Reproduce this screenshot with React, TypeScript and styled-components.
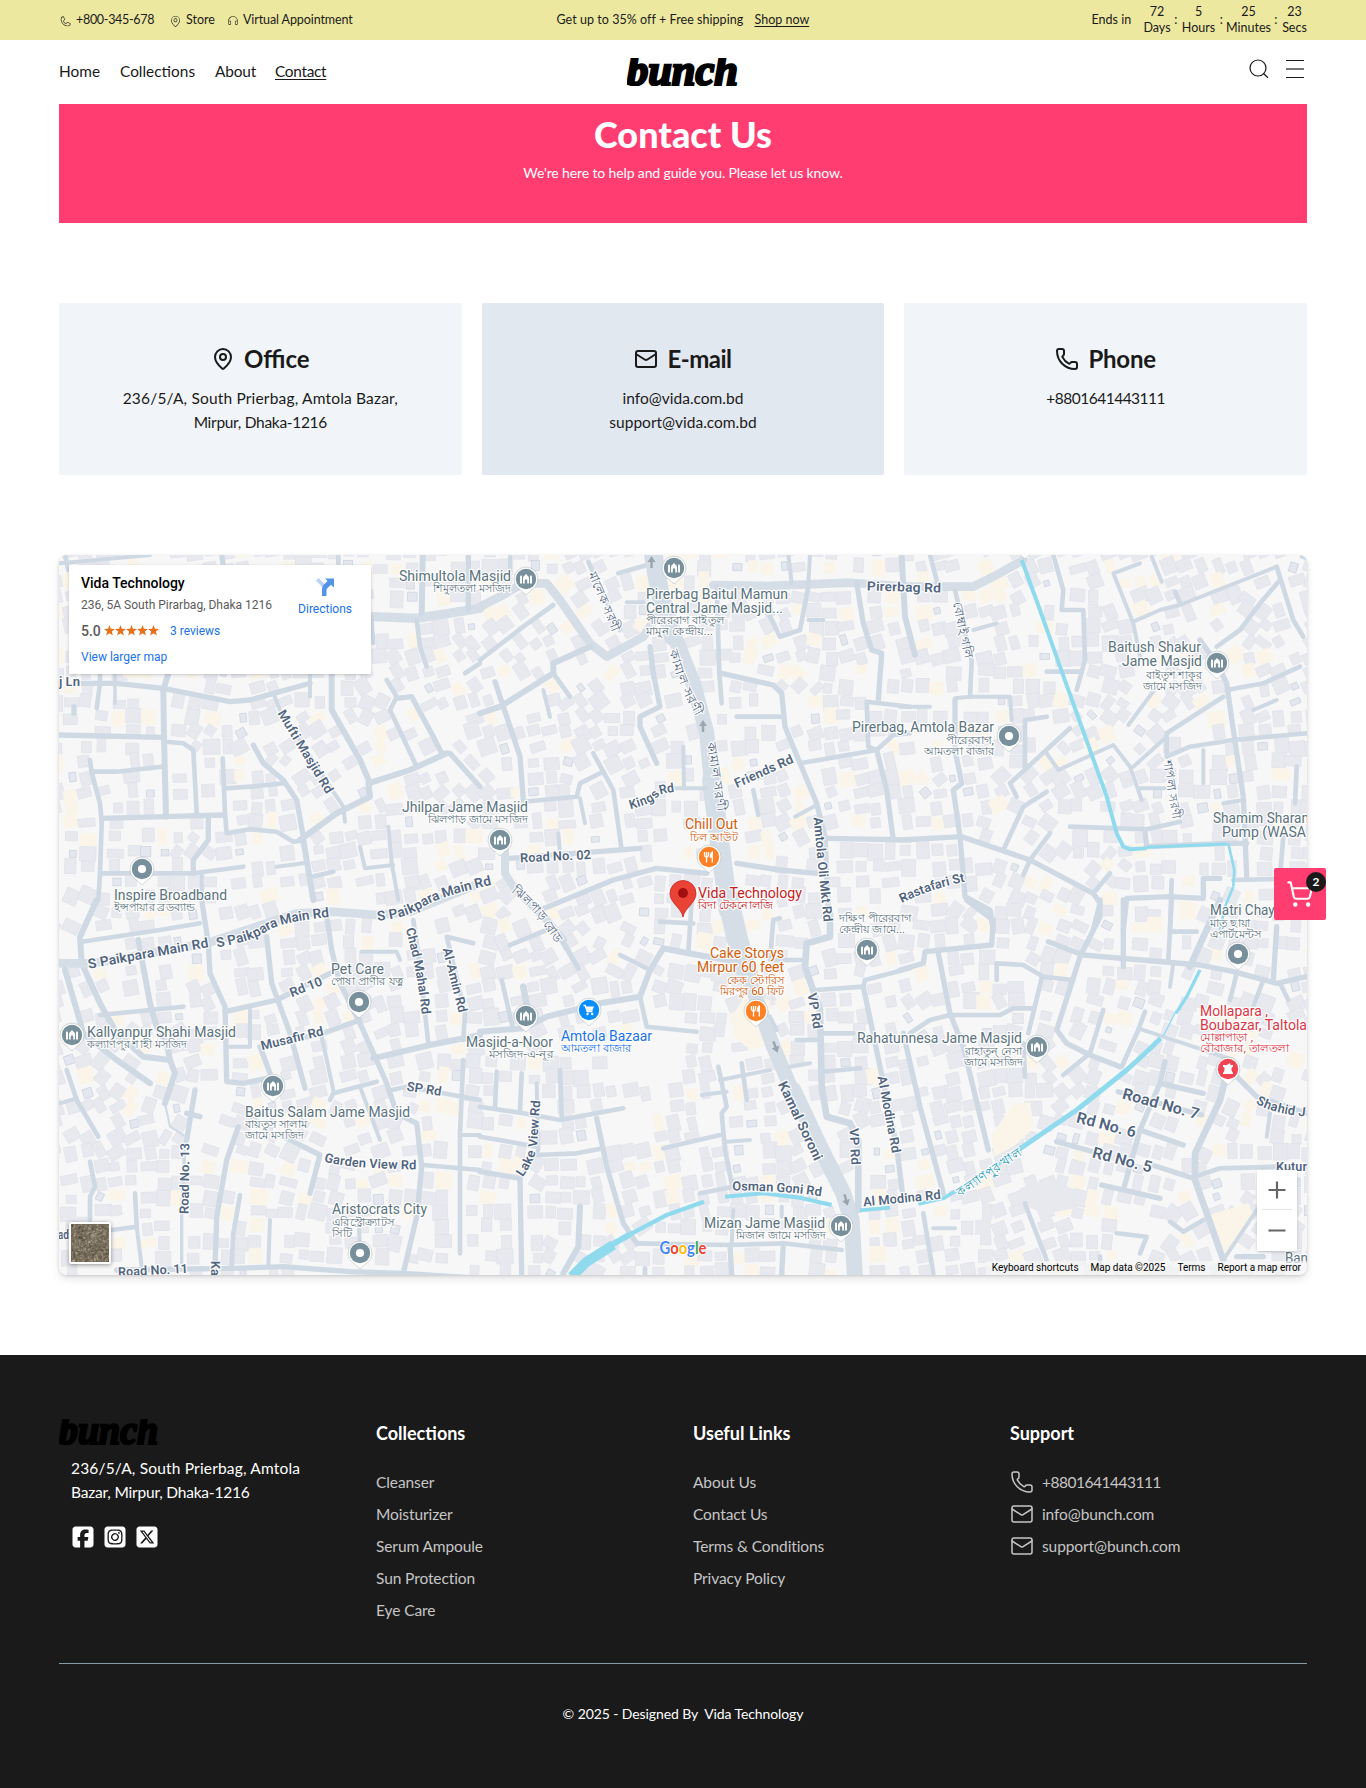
import React from "react";
import styled, { createGlobalStyle, css } from "styled-components";
import { MapPin, Mail, Phone, ShoppingCart } from "lucide-react";
import { PiPhoneLight, PiMapPinLight, PiHeadphonesLight } from "react-icons/pi";
import { FaSquareFacebook, FaSquareInstagram, FaSquareXTwitter } from "react-icons/fa6";

const GlobalStyle = createGlobalStyle`
  *, *::before, *::after { box-sizing: border-box; }
  body { margin: 0; background: #fff; color: #1a1a1a; font-family: Lato, "Noto Sans", sans-serif; }
  h1, h2, h3, p, ul { margin: 0; padding: 0; }
  ul { list-style: none; }
  a { color: inherit; text-decoration: none; }
`;

/* ---------- shared ---------- */

const Page = styled.div`
  width: 1366px;
  height: 1788px;
  display: flex;
  flex-direction: column;
`;

const Container = styled.div`
  width: 1248px;
  margin: 0 auto;
`;

const Fixed = styled.span<{ $w: number; $ls?: number; $line?: boolean }>`
  display: inline-block;
  width: ${(p) => p.$w}px;
  letter-spacing: ${(p) => p.$ls ?? 0}px;
  white-space: nowrap;
  ${(p) =>
    p.$line &&
    css`
      text-decoration: underline;
      text-underline-offset: 2px;
      text-decoration-thickness: 1px;
    `}
`;

const Spaced = styled.span<{ $ls: number }>`
  letter-spacing: ${(p) => p.$ls}px;
`;

/* ---------- announcement bar ---------- */

const TopBar = styled.div`
  background: #ede8a0;
  height: 40px;
  font-size: 12.5px;
  line-height: 16px;
`;

const TopInner = styled(Container)`
  height: 40px;
  display: grid;
  grid-template-columns: 1fr auto 1fr;
  align-items: center;
`;

const TopLeft = styled.div`
  display: flex;
  align-items: center;
`;

const TopItem = styled.a`
  display: flex;
  align-items: center;
  gap: 4px;
  margin-right: 14px;
  svg { margin-top: 2px; }
`;

const TopCenter = styled.div`
  display: flex;
  gap: 8px;
`;

const TopRight = styled.div`
  display: flex;
  justify-content: flex-end;
  align-items: center;
`;

const Unit = styled.div<{ $w: number }>`
  width: ${(p) => p.$w}px;
  display: flex;
  flex-direction: column;
  align-items: center;
  white-space: nowrap;
`;

const Colon = styled.span`
  width: 12.5px;
  text-align: center;
`;

/* ---------- header ---------- */

const Header = styled(Container)`
  height: 64px;
  display: grid;
  grid-template-columns: 1fr auto 1fr;
  align-items: center;
`;

const Nav = styled.nav`
  display: flex;
  gap: 20px;
  padding-bottom: 2px;
  font-size: 15.4px;
  line-height: 24px;
`;

const HeaderTools = styled.div`
  display: flex;
  justify-content: flex-end;
  gap: 16px;
  padding: 0 2px 8px 0;
`;

const LogoSvg = styled.svg`
  display: block;
  overflow: hidden;
`;

function Logo({ width, height }: { width: number; height: number }) {
  return (
    <LogoSvg width={width} height={height} viewBox="0 0 112 28" preserveAspectRatio="none">
      <text
        x="0"
        y="26.8"
        fontFamily='"Liberation Serif", serif'
        fontWeight="700"
        fontStyle="italic"
        fontSize="45"
        stroke="#000"
        strokeWidth="2.6"
        textLength="111"
        lengthAdjust="spacingAndGlyphs"
      >
        bunch
      </text>
    </LogoSvg>
  );
}

/* ---------- hero + cards ---------- */

const Hero = styled(Container)`
  height: 119px;
  background: #ff3d71;
  color: #fff;
  text-align: center;
  padding-top: 10px;
`;

const HeroTitle = styled.h1`
  font-size: 36px;
  line-height: 40px;
  font-weight: 900;
`;

const HeroText = styled.p`
  margin-top: 9px;
  font-size: 14px;
  line-height: 20px;
  letter-spacing: -0.13px;
`;

const Cards = styled(Container)`
  margin-top: 80px;
  display: grid;
  grid-template-columns: repeat(3, 1fr);
  gap: 20px;
`;

const Card = styled.section<{ $dark?: boolean }>`
  height: 172px;
  border-radius: 2px;
  background: ${(p) => (p.$dark ? "#e2e8f0" : "#f1f5f9")};
  padding-top: 40px;
  text-align: center;
`;

const CardTitle = styled.h2`
  display: flex;
  justify-content: center;
  align-items: center;
  gap: 9px;
  font-size: 24px;
  line-height: 32px;
  font-weight: 700;
`;

const CardText = styled.p`
  margin-top: 11px;
  font-size: 15.5px;
  line-height: 24px;
`;

/* ---------- map data ---------- */

type Pt = [number, number];
type Road = { pts: Pt[]; w: number };

const SHEETS: { ox: number; oy: number; roads: string[]; water: string[] }[] = [
  {
    ox: 50,
    oy: 550,
    roads: [
      "16 85,400 200,400 340,415 540,455 600,450 780,400",
      "16 30,555 335,562",
      "18 355,370 340,420 342,560 348,800",
      "14 150,370 150,400 140,475",
      "10 195,370 195,460",
      "16 72,470 72,490",
      "14 120,630 125,670 150,760 155,820 150,970 145,1050",
      "14 130,665 200,665 335,650",
      "14 345,575 400,580 430,600 440,790",
      "16 155,805 340,800 520,795",
      "14 518,625 525,790 530,850 600,838 680,845 730,875 750,872",
      "14 525,715 600,710 700,700",
      "16 610,585 640,640 700,690 740,750 760,860",
      "16 475,800 475,870 430,930 430,970",
      "14 155,970 430,970 580,950",
      "12 455,975 455,1050",
      "18 750,870 860,790 960,740 955,700 1080,660 1190,610",
      "12 670,430 690,480 850,725 880,770 885,815",
      "12 780,370 780,440",
      "18 845,370 845,480 930,630 960,700",
      "18 760,870 790,1050",
      "12 680,950 760,940",
      "14 785,980 850,965",
      "14 1010,390 1040,440 1020,480 1100,650",
      "16 1040,445 1085,440 1150,560 1175,610 1200,610 1290,710",
      "12 1015,830 1025,940 1045,1050",
      "12 930,890 945,955 1030,945",
      "28 970,200 1100,205 1290,175",
      "18 1118,15 1115,190",
      "14 1100,210 1110,290 1130,350",
      "16 1255,15 1255,180",
      "12 30,40 300,15",
      "14 45,15 55,60",
      "16 515,15 520,45",
      "14 865,15 865,45",
      "12 965,200 970,280",
      "14 1245,370 1290,340",
    ],
    water: [],
  },
  {
    ox: 480,
    oy: 550,
    roads: [
      "26 0,170 60,140 130,100 200,100 240,150 330,280 380,320 490,260 530,200",
      "12 90,15 90,60",
      "14 220,165 130,230 0,330",
      "14 325,35 350,90 420,240",
      "14 415,70 520,40",
      "56 520,15 540,130 580,260",
      "46 580,250 640,400 680,550 695,700",
      "58 695,690 715,850 735,1000 745,1080",
      "26 700,105 860,108 1110,98 1290,110",
      "14 710,110 718,370 725,460",
      "16 510,290 520,370 540,470 480,500 480,530 530,640",
      "18 330,290 220,340 220,370 60,470 0,490",
      "16 45,395 80,500 120,620 130,750",
      "14 220,370 270,440",
      "12 190,420 210,500",
      "14 130,755 290,740 300,700 370,665 340,610",
      "14 370,665 400,720 425,900",
      "16 725,370 880,405 905,430 915,530 960,640 1010,760 1035,860 1045,1080",
      "14 770,500 910,500",
      "14 960,640 1190,600 1240,555 1290,550",
      "12 610,590 612,715",
      "12 560,715 680,715",
      "16 90,925 480,895",
      "24 75,890 75,970 100,1010 200,1110 250,1170",
      "16 770,940 900,960 1010,970",
      "16 180,1080 400,990 530,955 680,970",
      "16 1130,100 1150,220 1175,300 1205,310 1195,450",
      "14 1290,470 1160,455 1165,590 1190,600",
      "16 1190,600 1220,720 1240,870",
      "16 1045,865 1290,870",
      "12 925,15 935,100",
      "12 990,15 985,100",
      "14 985,110 960,240 900,260 870,200",
      "12 985,210 1030,210",
      "14 820,720 835,795",
      "12 945,800 1010,765",
      "12 300,745 315,820",
      "12 235,850 240,910",
      "12 440,157 490,157",
    ],
    water: [],
  },
  {
    ox: 900,
    oy: 550,
    roads: [
      "26 0,110 115,110 220,110 280,80 370,30",
      "14 90,15 115,110",
      "18 5,20 15,200 45,315",
      "14 165,120 215,330 210,440",
      "12 165,445 210,440 330,440 335,510",
      "12 220,240 290,220",
      "14 460,15 490,120 485,180 550,180 555,330 530,420",
      "12 720,40 640,70 700,220 720,320",
      "12 700,215 780,180 840,165 1130,50",
      "14 825,125 840,160",
      "12 755,20 785,95",
      "14 1140,90 1080,160 1020,240 950,290",
      "14 1130,50 1180,210 1210,260",
      "16 900,270 950,340 980,400 1000,540 1030,740 1040,980",
      "14 980,420 1090,400 1200,350",
      "12 685,525 770,410",
      "14 970,440 800,550 800,620 870,590 1000,570 1220,550",
      "14 440,365 540,365",
      "14 440,500 375,510 375,650",
      "14 510,535 330,700 350,740",
      "12 440,610 475,660 640,585 690,650 725,750",
      "12 720,715 800,715",
      "14 440,725 370,770 310,900",
      "12 700,650 800,560",
      "14 510,830 740,838 840,815",
      "16 735,845 740,890 980,880 1040,880",
      "16 0,870 185,860 390,930 580,1030 600,1060 580,1140",
      "16 165,450 165,600 185,700 160,720 180,860 195,1040 270,1080 280,1140",
      "14 450,850 390,930 370,975",
      "14 630,970 580,1030",
      "14 815,990 810,1140",
      "16 670,1140 680,1045 810,1040 910,1045 910,985 960,985",
      "14 1000,990 1220,985",
      "12 970,760 1030,750",
      "14 1190,650 1185,760",
      "14 1150,860 1140,980",
      "12 910,600 910,700",
      "12 1060,480 1130,450",
      "12 1205,20 1220,25",
      "12 0,470 90,470",
    ],
    water: [
      "12 365,30 420,180 480,350 570,600 620,740 650,850 670,890 690,898 740,895",
      "9 740,892 980,882",
      "8 985,880 1003,960 1000,1010",
      "8 1000,1010 975,1070 960,1140",
    ],
  },
  {
    ox: 50,
    oy: 900,
    roads: [
      "18 140,0 90,110 95,190 150,310 200,400 280,470 360,480",
      "26 30,190 130,190 470,130 650,70 740,40 850,35 980,45 1080,35 1290,-50",
      "14 95,125 330,90 450,70",
      "18 265,120 300,310 320,380 350,430 360,480 375,520 345,610",
      "6 345,610 360,680 400,705",
      "14 150,345 400,320",
      "18 45,210 80,330 100,400 200,480 300,550",
      "16 455,0 475,130 480,220 525,320 530,545 580,550 650,535",
      "16 525,335 680,300 840,220",
      "12 540,440 600,440 600,330",
      "16 650,110 665,250 720,400 765,565",
      "16 830,50 845,150 870,250 930,370 975,470 1010,550 1040,640 1100,670 1115,800 1100,950 1060,1120",
      "16 930,360 820,400 630,440 660,520",
      "12 815,410 850,570",
      "18 970,475 1140,435 1290,405",
      "14 1090,60 1110,200 1135,430",
      "12 935,155 1040,155 1050,180",
      "14 1240,420 1245,340 1200,150 1190,110 1270,130",
      "14 840,600 850,580 980,545",
      "12 930,560 990,720",
      "14 1025,570 1070,560 1180,580 1290,600",
      "14 1240,480 1230,700 1230,1060",
      "14 1120,795 1290,810",
      "12 1240,705 1290,705",
      "16 435,570 410,720",
      "16 410,640 450,650",
      "10 405,730 395,940 395,1090",
      "16 565,680 530,780 500,950 495,1100",
      "16 700,710 810,765 780,880",
      "14 570,885 550,1000 545,1100",
      "16 200,1110 545,1105 700,1100 900,1115 1060,1120 1290,1135",
      "12 660,960 655,1100",
      "14 120,785 135,860 120,890 120,960",
      "14 255,880 260,980 185,990",
      "12 260,980 275,1100",
      "14 50,510 80,600 145,710",
      "12 30,610 80,595",
      "12 925,950 930,1040",
    ],
    water: [],
  },
  {
    ox: 480,
    oy: 900,
    roads: [
      "64 745,0 770,110 805,230",
      "44 800,220 830,300 880,440 940,580",
      "48 940,570 1020,740 1090,880 1115,960 1125,1135",
      "14 635,0 625,160",
      "14 540,65 640,70",
      "18 770,185 625,160 550,145 510,210 480,290 360,310 200,350 130,385 0,395",
      "14 420,165 510,210",
      "14 480,290 500,380 650,395",
      "14 900,55 880,60 870,180 970,180",
      "20 1050,40 1050,110 980,130 975,200 1020,330 1025,560 1040,650 1110,670 1135,720 1135,930",
      "14 1010,270 1150,260 1155,240 1290,205",
      "16 1150,260 1175,380 1200,500 1250,740 1270,900",
      "14 1030,400 1120,400",
      "14 950,420 1020,420",
      "14 1030,515 1140,505",
      "14 90,135 200,90",
      "16 240,110 295,205",
      "14 65,240 100,390",
      "20 130,260 145,340",
      "14 50,515 45,620",
      "14 125,520 120,630",
      "14 240,510 245,650",
      "12 170,550 175,750 125,830",
      "14 0,620 130,640 240,660 430,625",
      "16 350,655 380,800 430,970 470,1030",
      "14 0,710 170,740",
      "14 170,765 290,760 370,745",
      "16 0,815 120,835 125,1125",
      "14 715,500 740,620 725,640 735,750 755,850",
      "12 665,585 740,575",
      "14 785,490 800,600",
      "12 720,540 870,510",
      "12 930,500 990,490",
      "14 550,745 720,705",
      "12 740,725 810,720",
      "14 660,880 760,860",
      "18 300,920 295,1040 250,1120",
      "14 470,1030 750,1035 910,1030 1085,1050",
      "16 750,1035 755,1125",
      "16 910,1030 905,1125",
      "12 760,930 755,1030",
      "12 905,920 905,950",
      "14 495,1105 495,1125",
      "12 870,350 890,390",
    ],
    water: [
      "30 275,1130 320,1085 400,1035",
      "18 350,1060 450,1003",
      "13 450,1003 560,945 672,905",
      "12 735,890 850,880 960,893 1055,915",
      "11 1140,931 1230,923",
    ],
  },
  {
    ox: 900,
    oy: 900,
    roads: [
      "16 0,210 70,190 75,155 275,135 280,60 200,0",
      "16 115,160 150,340 190,440 265,750",
      "14 30,400 90,360 150,345 300,345 340,325 400,325",
      "14 290,240 290,190 370,195 430,230 520,240",
      "14 425,235 385,400",
      "14 370,430 375,530",
      "16 600,0 600,50 540,170 470,390 500,430 570,465 660,500",
      "16 445,125 550,165 900,195 1000,215 1130,250 1220,230",
      "16 670,0 670,200",
      "14 815,0 805,180",
      "12 820,190 810,260",
      "14 610,330 570,460 490,525",
      "14 735,335 715,390 665,500",
      "12 715,385 880,440 1000,480",
      "16 10,400 60,620 130,880",
      "16 795,485 780,550 720,690 670,870",
      "16 780,550 910,580",
      "16 720,690 850,735",
      "16 470,725 580,755",
      "16 740,790 880,835",
      "16 605,855 780,895",
      "16 655,575 905,645",
      "20 980,520 960,600 885,760 885,840 970,1080",
      "14 885,830 960,805 1130,800 1220,800",
      "16 1010,530 1070,590 1220,640",
      "12 970,1080 1070,930",
      "14 910,960 850,995 810,965",
      "14 1010,220 990,300",
      "14 1090,240 1060,320",
      "16 1130,80 1120,240",
      "14 1140,250 1165,300",
      "12 1110,640 1100,710",
      "14 375,910 390,950 440,1080",
      "14 70,940 100,1120",
      "12 100,985 165,985",
      "14 650,1000 740,1010 720,1060",
      "16 1010,1070 1090,1070",
      "14 600,1070 600,1100",
      "14 815,95 890,95",
      "20 870,200 960,0",
    ],
    water: [
      "11 55,912 130,895 240,830 340,760",
      "15 340,760 420,705 530,630 680,510 730,465 782,415",
      "4 790,408 830,330",
      "10 828,340 860,290 900,210",
    ],
  },
];

function parse(line: string, ox: number, oy: number): Road {
  const [w, ...rest] = line.split(" ");
  return {
    w: Number(w) / 3,
    pts: rest.map((p) => {
      const [x, y] = p.split(",").map(Number);
      return [ox + x / 3, oy + y / 3] as Pt;
    }),
  };
}

const ROADS = SHEETS.flatMap((s) => s.roads.map((r) => parse(r, s.ox, s.oy)));
const WATER = SHEETS.flatMap((s) => s.water.map((r) => parse(r, s.ox, s.oy)));

/* Open ground without houses: x, y, radius */
const CLEARINGS: [number, number, number][] = [
  [520, 698, 22],
  [655, 1058, 30],
  [625, 1120, 26],
  [470, 945, 20],
  [215, 1100, 18],
  [170, 1060, 14],
  [660, 1020, 18],
  [1040, 730, 16],
  [1140, 1235, 26],
  [1232, 1190, 14],
  [110, 760, 14],
  [455, 725, 18],
];

function makeRandom(seed: number) {
  let a = seed;
  return () => {
    a = (a + 0x6d2b79f5) | 0;
    let t = Math.imul(a ^ (a >>> 15), 1 | a);
    t = (t + Math.imul(t ^ (t >>> 7), 61 | t)) ^ t;
    return ((t ^ (t >>> 14)) >>> 0) / 4294967296;
  };
}

type Building = { x: number; y: number; w: number; h: number; a: number; kind: number };

function makeBuildings(): Building[] {
  const rnd = makeRandom(17);
  const segs: [Pt, Pt, number][] = [];
  ROADS.forEach((r) => {
    for (let i = 1; i < r.pts.length; i++) segs.push([r.pts[i - 1], r.pts[i], r.w]);
  });
  const out: Building[] = [];
  for (let gy = 552; gy < 1285; gy += 15) {
    for (let gx = 55; gx < 1315; gx += 15.5) {
      const x = gx + (rnd() - 0.5) * 5;
      const y = gy + (rnd() - 0.5) * 5;
      const w = 8 + rnd() * 8;
      const h = 9 + rnd() * 8;
      const keep = rnd();
      const tone = rnd();
      let best = 1e9;
      let ang = 0;
      let rw = 0;
      for (const [p, q, sw] of segs) {
        const dx = q[0] - p[0];
        const dy = q[1] - p[1];
        const t = Math.max(0, Math.min(1, ((x - p[0]) * dx + (y - p[1]) * dy) / (dx * dx + dy * dy)));
        const d = Math.hypot(x - p[0] - t * dx, y - p[1] - t * dy);
        if (d < best) {
          best = d;
          ang = (Math.atan2(dy, dx) * 180) / Math.PI;
          rw = sw;
        }
      }
      if (best < rw / 2 + 2) continue;
      if (CLEARINGS.some(([cx, cy, r]) => Math.hypot(x - cx, y - cy) < r)) continue;
      if (keep > (best > 30 ? 0.5 : 0.83)) continue;
      const main = rw > 8 ? 0.4 : 0.1;
      const kind = tone < main ? 1 : tone > 0.94 ? 2 : 0;
      out.push({ x, y, w: kind === 2 ? w * 0.65 : w, h: kind === 2 ? h * 0.6 : h, a: ang, kind });
    }
  }
  return out;
}

const BUILDINGS = makeBuildings();
const B_FILL = ["#e8e9ef", "#faf5e8", "#e5e7ef"];
const B_LINE = ["#e0e2ea", "#faf5e8", "#c9d1e0"];

type Label = { x: number; y: number; t: string; w: number; c?: string; bn?: boolean };
const GREY = "#5b737d";
const ORANGE = "#d3600d";
const RED = "#c5221f";
const BLUE = "#1a73e8";
const PINK = "#dc3545";

const LABELS: Label[] = [
  { x: 399, y: 581, t: "Shimultola Masjid", w: 112 },
  { x: 433, y: 591, t: "শিমুলতলা মসজিদ", w: 78, bn: true },
  { x: 646, y: 599, t: "Pirerbag Baitul Mamun", w: 142 },
  { x: 646, y: 613, t: "Central Jame Masjid...", w: 137 },
  { x: 646, y: 623, t: "পীরেরবাগ বাইতুল", w: 78, bn: true },
  { x: 646, y: 634, t: "মামুন কেন্দ্রীয়...", w: 67, bn: true },
  { x: 1108, y: 652, t: "Baitush Shakur", w: 93 },
  { x: 1122, y: 666, t: "Jame Masjid", w: 80 },
  { x: 1146, y: 678, t: "বাইতুশ শাকুর", w: 56, bn: true },
  { x: 1143, y: 689, t: "জামে মসজিদ", w: 59, bn: true },
  { x: 852, y: 732, t: "Pirerbag, Amtola Bazar", w: 142 },
  { x: 946, y: 743, t: "পীরেরবাগ,", w: 48, bn: true },
  { x: 924, y: 754, t: "আমতলা বাজার", w: 70, bn: true },
  { x: 1213, y: 823, t: "Shamim Sharan", w: 96 },
  { x: 1222, y: 837, t: "Pump (WASA", w: 84 },
  { x: 402, y: 812, t: "Jhilpar Jame Masjid", w: 126 },
  { x: 428, y: 822, t: "ঝিলপাড় জামে মসজিদ", w: 100, bn: true },
  { x: 114, y: 900, t: "Inspire Broadband", w: 113 },
  { x: 114, y: 910, t: "ইন্সপায়ার ব্রডব্যান্ড", w: 81, bn: true },
  { x: 87, y: 1037, t: "Kallyanpur Shahi Masjid", w: 149 },
  { x: 87, y: 1047, t: "কল্যাণপুর শাহী মসজিদ", w: 100, bn: true },
  { x: 331, y: 974, t: "Pet Care", w: 53 },
  { x: 331, y: 984, t: "পোষা প্রাণীর যত্ন", w: 72, bn: true },
  { x: 245, y: 1117, t: "Baitus Salam Jame Masjid", w: 165 },
  { x: 245, y: 1127, t: "বায়তুস সালাম", w: 62, bn: true },
  { x: 245, y: 1138, t: "জামে মসজিদ", w: 59, bn: true },
  { x: 332, y: 1214, t: "Aristocrats City", w: 95 },
  { x: 332, y: 1225, t: "এরিস্ট্রোক্র্যাটস", w: 62, bn: true },
  { x: 332, y: 1236, t: "সিটি", w: 20, bn: true },
  { x: 685, y: 829, t: "Chill Out", w: 53, c: ORANGE },
  { x: 690, y: 840, t: "চিল আউট", w: 48, c: ORANGE, bn: true },
  { x: 698, y: 898, t: "Vida Technology", w: 104, c: RED },
  { x: 698, y: 908, t: "বিদা টেকনোলজি", w: 75, c: RED, bn: true },
  { x: 710, y: 958, t: "Cake Storys", w: 74, c: ORANGE },
  { x: 697, y: 972, t: "Mirpur 60 feet", w: 87, c: ORANGE },
  { x: 727, y: 983, t: "কেক স্টোরিস", w: 57, c: ORANGE, bn: true },
  { x: 720, y: 994, t: "মিরপুর 60 ফিট", w: 64, c: ORANGE, bn: true },
  { x: 466, y: 1047, t: "Masjid-a-Noor", w: 87 },
  { x: 489, y: 1057, t: "মসজিদ-এ-নূর", w: 64, bn: true },
  { x: 561, y: 1041, t: "Amtola Bazaar", w: 91, c: BLUE },
  { x: 561, y: 1051, t: "আমতলা বাজার", w: 70, c: BLUE, bn: true },
  { x: 839, y: 921, t: "দক্ষিণ পীরেরবাগ", w: 72, bn: true },
  { x: 839, y: 932, t: "কেন্দ্রীয় জামে...", w: 66, bn: true },
  { x: 857, y: 1043, t: "Rahatunnesa Jame Masjid", w: 165 },
  { x: 965, y: 1054, t: "রাহাতুন্ নেসা", w: 57, bn: true },
  { x: 964, y: 1065, t: "জামে মসজিদ", w: 59, bn: true },
  { x: 1210, y: 915, t: "Matri Chaya", w: 72 },
  { x: 1210, y: 926, t: "মাতৃ ছায়া", w: 40, bn: true },
  { x: 1210, y: 937, t: "এপার্টমেন্টস", w: 51, bn: true },
  { x: 1200, y: 1016, t: "Mollapara ,", w: 68, c: PINK },
  { x: 1200, y: 1030, t: "Boubazar, Taltola", w: 107, c: PINK },
  { x: 1200, y: 1040, t: "মোল্লাপাড়া ,", w: 53, c: PINK, bn: true },
  { x: 1200, y: 1051, t: "বৌবাজার, তালতলা", w: 89, c: PINK, bn: true },
  { x: 704, y: 1228, t: "Mizan Jame Masjid", w: 121 },
  { x: 736, y: 1238, t: "মিজান জামে মসজিদ", w: 90, bn: true },
  { x: 1285, y: 1263, t: "Ban", w: 23 },
];

type RoadLabel = { d: string; t: string; w: number; s?: number; c?: string; bn?: boolean };

const ROAD_LABELS: RoadLabel[] = [
  { d: "M867,586 L942,588", t: "Pirerbag Rd", w: 74 },
  { d: "M59,682 L90,682", t: "j Ln", w: 21 },
  { d: "M281,711 L335,800", t: "Mufti Masjid Rd", w: 95 },
  { d: "M629,805 Q652,799 655,793 Q660,788 680,787", t: "Kings Rd", w: 49 },
  { d: "M735,784 L797,756", t: "Friends Rd", w: 63 },
  { d: "M520,858 L600,854", t: "Road No. 02", w: 71 },
  { d: "M818,817 L824,880 L829,930", t: "Amtola Oli Mkt Rd", w: 105 },
  { d: "M88,964 L216,941", t: "S Paikpara Main Rd", w: 122, s: 13.5 },
  { d: "M216,943 Q252,936 262,929 Q275,917 340,911", t: "S Paikpara Main Rd", w: 118, s: 13.5 },
  { d: "M377,916 Q405,914 424,901 Q440,891 500,878", t: "S Paikpara Main Rd", w: 120, s: 13.5 },
  { d: "M290,993 L328,978", t: "Rd 10", w: 34 },
  { d: "M261,1046 L330,1029", t: "Musafir Rd", w: 64 },
  { d: "M410,928 Q422,970 427,1020", t: "Chad Mahal Rd", w: 88 },
  { d: "M447,948 L465,1020", t: "Al-Amin Rd", w: 66 },
  { d: "M407,1086 L450,1093", t: "SP Rd", w: 35 },
  { d: "M325,1157 Q350,1165 430,1165", t: "Garden View Rd", w: 92 },
  { d: "M184,1214 L185,1140", t: "Road No. 13", w: 71 },
  { d: "M118,1272 L195,1268", t: "Road No. 11", w: 70 },
  { d: "M215,1261 L215,1285", t: "Kal", w: 18 },
  { d: "M58,1235 L75,1235", t: "ad", w: 11 },
  { d: "M900,899 Q930,884 966,877", t: "Rastafari St", w: 68 },
  { d: "M812,993 L819,1035", t: "VP Rd", w: 36 },
  { d: "M854,1128 L856,1170", t: "VP Rd", w: 37 },
  { d: "M782,1082 L822,1166", t: "Kamal Soroni", w: 86, s: 13.5 },
  { d: "M882,1076 L898,1160", t: "Al Modina Rd", w: 78 },
  { d: "M519,1175 Q533,1155 533,1140 L536,1095", t: "Lake View Rd", w: 78 },
  { d: "M732,1186 Q790,1186 828,1193", t: "Osman Goni Rd", w: 90 },
  { d: "M863,1202 L945,1194", t: "Al Modina Rd", w: 78 },
  { d: "M1123,1093 L1205,1116", t: "Road No. 7", w: 79, s: 15.5 },
  { d: "M1077,1117 L1142,1134", t: "Rd No. 6", w: 61, s: 15.5 },
  { d: "M1093,1152 L1158,1169", t: "Rd No. 5", w: 61, s: 15.5 },
  { d: "M1258,1099 Q1275,1111 1320,1113", t: "Shahid J", w: 50 },
  { d: "M1276,1167 L1320,1167", t: "Kutur", w: 31 },
  { d: "M592,572 L619,636", t: "মালেক সরণী", w: 64, bn: true },
  { d: "M673,650 Q684,690 703,720", t: "কামাল সরণী", w: 70, bn: true },
  { d: "M711,742 L723,818", t: "কামাল সরণী", w: 70, bn: true },
  { d: "M514,889 Q539,906 562,946", t: "ঝিলপাড় রোড", w: 70, bn: true },
  { d: "M957,602 L970,664", t: "বোম্বাই গলি", w: 58, bn: true },
  { d: "M1167,760 L1178,825", t: "শাপলা সরণী", w: 60, bn: true },
  { d: "M958,1193 L1025,1148", t: "কল্যাণপুর খাল", w: 75, bn: true, c: "#1c94ad" },
];

type PinKind = "dot" | "mosque" | "food" | "cart" | "med";
const PINS: [number, number, PinKind][] = [
  [526, 579, "mosque"],
  [674, 568, "mosque"],
  [1217, 663, "mosque"],
  [1009, 736, "dot"],
  [500, 840, "mosque"],
  [142, 869, "dot"],
  [72, 1035, "mosque"],
  [359, 1002, "dot"],
  [273, 1086, "mosque"],
  [360, 1253, "dot"],
  [709, 857, "food"],
  [756, 1011, "food"],
  [526, 1016, "mosque"],
  [589, 1010, "cart"],
  [867, 950, "mosque"],
  [1037, 1047, "mosque"],
  [1238, 954, "dot"],
  [1228, 1069, "med"],
  [841, 1226, "mosque"],
  [1025, 543, "dot"],
];

const PIN_FILL: Record<PinKind, string> = {
  dot: "#78909c",
  mosque: "#78909c",
  food: "#ff8126",
  cart: "#0a8dff",
  med: "#f04453",
};

function Pin({ x, y, kind }: { x: number; y: number; kind: PinKind }) {
  return (
    <g transform={`translate(${x} ${y})`}>
      <path
        d="M0 15.5C-1.5 15.5 -3 12.5 -7.5 9.5A12 12 0 1 1 7.5 9.5C3 12.5 1.5 15.5 0 15.5Z"
        fill="#fff"
        stroke="#8a949a"
        strokeOpacity=".45"
        strokeWidth=".8"
      />
      <circle r="10.2" fill={PIN_FILL[kind]} />
      {kind === "dot" && <circle r="4.1" fill="#fff" />}
      {kind === "mosque" && (
        <path
          d="M-6 4.500V-2.500L-5-4L-4-2.500V4.500ZM4 4.500V-2.500L5-4L6-2.500V4.500ZM-3 4.500V-1C-3-3-1-3.200 0-5C1-3.200 3-3 3-1V4.500H1.200V1.500A1.200 1.200 0 0 0-1.200 1.500V4.500Z"
          fill="#fff"
        />
      )}
      {kind === "food" && (
        <g stroke="#fff" strokeWidth="1.3" fill="none">
          <path d="M-4.500-5V-2.500Q-4.500 0-2.500 0T-.5-2.500V-5M-2.500-5V5.500" />
          <path d="M3.300 5.500V-5Q1.400-4 1.400 0H3" fill="#fff" />
        </g>
      )}
      {kind === "cart" && (
        <g>
          <path d="M-5.500-4.500H-3.800L-1.800 1.500H3.500" stroke="#fff" strokeWidth="1.3" fill="none" />
          <path d="M-3.500-3.500H5L3.300 .8H-2Z" fill="#fff" />
          <circle cx="-1.5" cy="4" r="1.2" fill="#fff" />
          <circle cx="3.2" cy="4" r="1.2" fill="#fff" />
        </g>
      )}
      {kind === "med" && <path d="M-5-4H-1L2-6L2.500-4H5V-2H4Q2.500 1 5 4V5H-5V4Q-2.500 1-4-2H-5Z" fill="#fff" />}
    </g>
  );
}

/* ---------- map ---------- */

const MapFrame = styled(Container)`
  position: relative;
  margin-top: 80px;
  height: 720px;
  border-radius: 8px;
  overflow: hidden;
  background: #f7f7f7;
  box-shadow: 0 1px 3px rgba(0, 0, 0, 0.14), 0 4px 8px rgba(0, 0, 0, 0.1);
  font-family: Roboto, "Noto Sans", sans-serif;
`;

const MapSvg = styled.svg`
  display: block;
`;

const InfoCard = styled.div`
  position: absolute;
  left: 10px;
  top: 10px;
  width: 302px;
  height: 109px;
  padding: 9px 19px 0 12px;
  background: #fff;
  border-radius: 1px;
  box-shadow: 0 1px 4px -1px rgba(0, 0, 0, 0.3);
  display: flex;
  justify-content: space-between;
  font-size: 12px;
`;

const PlaceInfo = styled.div`
  display: flex;
  flex-direction: column;
`;

const PlaceName = styled.div`
  color: #000;
  font-size: 14px;
  line-height: 18px;
  font-weight: 500;
`;

const PlaceAddress = styled.div`
  margin-top: 5px;
  color: #5b5b5b;
  line-height: 16px;
`;

const Rating = styled.div`
  margin-top: 9px;
  display: flex;
  align-items: center;
  line-height: 18px;
  color: #5b5b5b;
`;

const Score = styled.span`
  width: 23px;
  font-size: 14px;
  font-weight: 500;
  white-space: nowrap;
`;

const Stars = styled.svg`
  margin: 0 11px 1px 0;
`;

const BlueLink = styled.a<{ $top?: number }>`
  margin-top: ${(p) => p.$top ?? 0}px;
  color: #1a73e8;
  line-height: 16px;
`;

const Directions = styled.div`
  padding-top: 3px;
  display: flex;
  flex-direction: column;
  align-items: center;
  gap: 4px;
`;

const SatButton = styled.div`
  position: absolute;
  left: 10px;
  top: 667px;
  width: 42px;
  height: 42px;
  border: 2px solid #fff;
  border-radius: 2px;
  overflow: hidden;
  background: #776c5a;
  box-shadow: 0 1px 4px rgba(0, 0, 0, 0.4);
`;

const ZoomBox = styled.div`
  position: absolute;
  right: 10px;
  top: 615px;
  width: 40px;
  height: 81px;
  background: #fff;
  box-shadow: 0 1px 4px -1px rgba(0, 0, 0, 0.3);
  display: flex;
  flex-direction: column;
`;

const ZoomButton = styled.div<{ $line?: boolean }>`
  height: 40px;
  margin: 0 5px;
  display: flex;
  align-items: center;
  justify-content: center;
  border-bottom: ${(p) => (p.$line ? "1px solid #e6e6e6" : "none")};
`;

const Attribution = styled.div`
  position: absolute;
  right: 0;
  bottom: 0;
  height: 14px;
  padding: 0 6px;
  display: flex;
  gap: 12px;
  font-size: 10px;
  line-height: 14px;
  color: #000;
  background: rgba(245, 245, 245, 0.7);
`;

const toPoints = (pts: Pt[]) => pts.map((p) => p.map((n) => n.toFixed(1)).join(",")).join(" ");

function SatelliteTexture() {
  const rnd = makeRandom(5);
  const tones = ["#8b7f6c", "#5c5346", "#a59a86", "#4b453a", "#7a705e", "#6b6a56", "#b5aa95"];
  return (
    <svg width="38" height="38">
      {Array.from({ length: 760 }, (_, i) => (
        <rect
          key={i}
          x={rnd() * 38}
          y={rnd() * 38}
          width={0.8 + rnd() * 1.4}
          height={0.8 + rnd() * 1.2}
          fill={tones[Math.floor(rnd() * tones.length)]}
          opacity=".75"
        />
      ))}
    </svg>
  );
}

function StreetMap() {
  return (
    <MapSvg width="1248" height="720" viewBox="59 555 1248 720">
      <rect x="59" y="555" width="1248" height="720" fill="#f7f7f7" />
      {BUILDINGS.map((b, i) => (
        <rect
          key={i}
          x={-b.w / 2}
          y={-b.h / 2}
          width={b.w}
          height={b.h}
          fill={B_FILL[b.kind]}
          stroke={B_LINE[b.kind]}
          strokeWidth=".7"
          transform={`translate(${b.x.toFixed(1)} ${b.y.toFixed(1)}) rotate(${b.a.toFixed(1)})`}
        />
      ))}
      <polygon points="1021,1188 1032,1183 1060,1182 1085,1196 1077,1208 1042,1214 1022,1203 1016,1195" fill="#e8e9ef" />
      <polygon points="992,1135 1012,1105 1030,1102 1034,1128 1014,1146 994,1157" fill="#faf5e8" />
      <polygon points="1206,1216 1248,1203 1254,1215 1226,1255" fill="#faf5e8" />
      <polygon points="735,1012 745,995 770,1000 772,1045 750,1050 733,1035" fill="#faf5e8" />
      <g fill="none" stroke="#cfd9e4" strokeLinecap="round" strokeLinejoin="round">
        {ROADS.map((r, i) => (
          <polyline key={i} points={toPoints(r.pts)} strokeWidth={r.w} stroke={r.w > 7 ? "#d5dee6" : "#cfd9e4"} />
        ))}
      </g>
      <g fill="none" stroke="#90daee" strokeLinejoin="round">
        {WATER.map((r, i) => (
          <polyline key={i} points={toPoints(r.pts)} strokeWidth={r.w} />
        ))}
      </g>
      <g fill="#9aa5ad">
        {[
          [651.5, 562, 0],
          [703, 726, 0],
          [775.5, 1047, 160],
          [846, 1200, 165],
        ].map(([x, y, a]) => (
          <path key={y} d="M0-6L4 0H1.200V6H-1.200V0H-4Z" transform={`translate(${x} ${y}) rotate(${a})`} />
        ))}
      </g>
      <g
        fontFamily='Roboto, "Noto Sans", sans-serif'
        stroke="#fff"
        strokeWidth="2.5"
        strokeLinejoin="round"
        strokeOpacity=".9"
        paintOrder="stroke"
      >
        {ROAD_LABELS.map((l, i) => (
          <React.Fragment key={i}>
            <path id={`street-${i}`} d={l.d} fill="none" stroke="none" />
            <text
              fontSize={l.s ?? (l.bn ? 12.5 : 12.8)}
              fontWeight={l.bn ? 400 : 600}
              fill={l.c ?? "#52657f"}
              dy=".35em"
            >
              <textPath href={`#street-${i}`} textLength={l.w} lengthAdjust="spacingAndGlyphs">
                {l.t}
              </textPath>
            </text>
          </React.Fragment>
        ))}
        {LABELS.map((l, i) => (
          <text
            key={i}
            x={l.x}
            y={l.bn ? l.y + 0.6 : l.y}
            fontSize={l.bn ? 11.3 : 14.2}
            fill={l.c ?? GREY}
            textLength={l.w}
            lengthAdjust="spacingAndGlyphs"
          >
            {l.t}
          </text>
        ))}
      </g>
      {PINS.map(([x, y, kind], i) => (
        <Pin key={i} x={x} y={y} kind={kind} />
      ))}
      <path
        d="M683 917C681.5 908 670 903 670 893.5A13 13 0 0 1 696 893.5C696 903 684.5 908 683 917Z"
        fill="#ea4335"
        stroke="#c5221f"
        strokeWidth=".8"
      />
      <circle cx="683" cy="893" r="5" fill="#a50e0e" />
      <text
        x="659.5"
        y="1254"
        fontFamily="Lato, sans-serif"
        fontSize="16.5"
        fontWeight="700"
        textLength="47"
        lengthAdjust="spacingAndGlyphs"
        stroke="#fff"
        strokeWidth="1.5"
        paintOrder="stroke"
      >
        <tspan fill="#4285f4">G</tspan>
        <tspan fill="#ea4335">o</tspan>
        <tspan fill="#fbbc04">o</tspan>
        <tspan fill="#4285f4">g</tspan>
        <tspan fill="#34a853">l</tspan>
        <tspan fill="#ea4335">e</tspan>
      </text>
    </MapSvg>
  );
}

function MapPanel() {
  return (
    <MapFrame>
      <StreetMap />
      <InfoCard>
        <PlaceInfo>
          <PlaceName>Vida Technology</PlaceName>
          <PlaceAddress>236, 5A South Pirarbag, Dhaka 1216</PlaceAddress>
          <Rating>
            <Score>5.0</Score>
            <Stars width="55" height="11" viewBox="0 0 55 11" fill="#e7711b">
              {[0, 1, 2, 3, 4].map((i) => (
                <path
                  key={i}
                  transform={`translate(${i * 11} 0)`}
                  d="M5.5 0L6.9 3.8L11 4L7.8 6.5L8.9 10.5L5.5 8.2L2.1 10.5L3.2 6.5L0 4L4.1 3.8Z"
                />
              ))}
            </Stars>
            <BlueLink>3 reviews</BlueLink>
          </Rating>
          <BlueLink $top={9}>View larger map</BlueLink>
        </PlaceInfo>
        <Directions>
          <svg width="20" height="20" viewBox="0 0 20 20">
            <path d="M1 3.5L3.5 1L10 7.5L7.5 10.5Z" fill="#bcd3f8" />
            <path d="M7 19V12Q7 9 9 7.5L12.500 4L10 1.500H19V10.500L16 7.800L12.500 11Q11.500 12 11.500 13.500V19Z" fill="#5394e8" />
          </svg>
          <BlueLink>Directions</BlueLink>
        </Directions>
      </InfoCard>
      <SatButton>
        <SatelliteTexture />
      </SatButton>
      <ZoomBox>
        <ZoomButton $line>
          <svg width="18" height="18" stroke="#666" strokeWidth="2.2">
            <path d="M0.5 9H17.5M9 0.5V17.5" />
          </svg>
        </ZoomButton>
        <ZoomButton>
          <svg width="18" height="18" stroke="#666" strokeWidth="2.2">
            <path d="M0.5 9.5H17.5" />
          </svg>
        </ZoomButton>
      </ZoomBox>
      <Attribution>
        <span>Keyboard shortcuts</span>
        <span>Map data ©2025</span>
        <span>Terms</span>
        <span>Report a map error</span>
      </Attribution>
    </MapFrame>
  );
}

/* ---------- cart ---------- */

const CartButton = styled.button`
  position: absolute;
  left: 1274px;
  top: 868px;
  width: 52px;
  height: 52px;
  padding: 0;
  border: 0;
  border-radius: 2px;
  background: #ff3d71;
  color: #fff;
  display: flex;
  align-items: center;
  justify-content: center;
`;

const CartBadge = styled.span`
  position: absolute;
  right: 0;
  top: 4px;
  width: 20px;
  height: 20px;
  border-radius: 50%;
  background: #1a1a1a;
  color: #fff;
  font: 700 12px/20px Lato, sans-serif;
  text-align: center;
`;

/* ---------- footer ---------- */

const Footer = styled.footer`
  margin-top: 80px;
  flex: 1;
  background: #1a1a1a;
  color: #fff;
  padding-top: 64px;
`;

const FooterGrid = styled(Container)`
  height: 245px;
  display: grid;
  grid-template-columns: repeat(4, 1fr);
  gap: 20px;
  border-bottom: 1px solid #8499a5;
`;

const Address = styled.p`
  margin: 11px 0 0 12px;
  font-size: 15.5px;
  line-height: 24px;
`;

const Socials = styled.div`
  display: flex;
  gap: 8px;
  margin: 21px 0 0 12px;
`;

const FooterTitle = styled.h3`
  font-size: 18px;
  line-height: 28px;
  font-weight: 700;
`;

const FooterList = styled.ul`
  margin-top: 19px;
  color: #c6c6c6;
  font-size: 15.5px;
`;

const FooterItem = styled.li<{ $ls?: number }>`
  height: 32px;
  display: flex;
  align-items: center;
  gap: 8px;
  letter-spacing: ${(p) => p.$ls ?? -0.1}px;
`;

const Copyright = styled.p`
  margin-top: 40px;
  font-size: 14px;
  line-height: 20px;
  letter-spacing: -0.1px;
  text-align: center;
  white-space: pre;
`;

const COLUMNS = [
  { title: "Collections", items: ["Cleanser", "Moisturizer", "Serum Ampoule", "Sun Protection", "Eye Care"] },
  { title: "Useful Links", items: ["About Us", "Contact Us", "Terms & Conditions", "Privacy Policy"] },
];

const COUNTDOWN: [string, string, number][] = [
  ["72", "Days", 25],
  ["5", "Hours", 33],
  ["25", "Minutes", 42],
  ["23", "Secs", 25],
];

export default function App() {
  return (
    <Page>
      <GlobalStyle />
      <TopBar>
        <TopInner>
          <TopLeft>
            <TopItem>
              <PiPhoneLight size={13} />
              <Fixed $w={79} $ls={-0.3}>+800-345-678</Fixed>
            </TopItem>
            <TopItem>
              <PiMapPinLight size={13} />
              <Fixed $w={27}>Store</Fixed>
            </TopItem>
            <TopItem>
              <PiHeadphonesLight size={12} />
              <Fixed $w={111} $ls={-0.1}>Virtual Appointment</Fixed>
            </TopItem>
          </TopLeft>
          <TopCenter>
            <Fixed $w={190} $ls={0.05}>Get up to 35% off + Free shipping</Fixed>
            <Fixed as="a" $w={55} $line>Shop now</Fixed>
          </TopCenter>
          <TopRight>
            <Fixed $w={53}>Ends in</Fixed>
            {COUNTDOWN.map(([n, label, w], i) => (
              <React.Fragment key={label}>
                {i > 0 && <Colon>:</Colon>}
                <Unit $w={w}>
                  <span>{n}</span>
                  <span>{label}</span>
                </Unit>
              </React.Fragment>
            ))}
          </TopRight>
        </TopInner>
      </TopBar>

      <Header>
        <Nav>
          <Fixed as="a" $w={41}>Home</Fixed>
          <Fixed as="a" $w={75}>Collections</Fixed>
          <Fixed as="a" $w={40} $ls={-0.15}>About</Fixed>
          <Fixed as="a" $w={51} $ls={-0.3} $line>Contact</Fixed>
        </Nav>
        <Logo width={112} height={28} />
        <HeaderTools>
          <svg width="20" height="20" fill="none" stroke="#1a1a1a" strokeWidth="1.2">
            <circle cx="9" cy="10" r="8" />
            <path d="M14.5 15.5L19 19.8" />
          </svg>
          <svg width="20" height="20" fill="none" stroke="#1a1a1a">
            <path d="M1 2.5H19M1 19.5H19" />
            <path d="M1 11H19" strokeWidth="1.2" />
          </svg>
        </HeaderTools>
      </Header>

      <Hero>
        <HeroTitle>Contact Us</HeroTitle>
        <HeroText>We're here to help and guide you. Please let us know.</HeroText>
      </Hero>

      <Cards>
        <Card>
          <CardTitle><MapPin size={24} />Office</CardTitle>
          <CardText>
            <Spaced $ls={0.18}>236/5/A, South Prierbag, Amtola Bazar,</Spaced>
            <br />
            <Spaced $ls={-0.3}>Mirpur, Dhaka-1216</Spaced>
          </CardText>
        </Card>
        <Card $dark>
          <CardTitle><Mail size={24} /><Spaced $ls={-0.5}>E-mail</Spaced></CardTitle>
          <CardText>info@vida.com.bd<br />support@vida.com.bd</CardText>
        </Card>
        <Card>
          <CardTitle><Phone size={24} /><Spaced $ls={-0.2}>Phone</Spaced></CardTitle>
          <CardText><Spaced $ls={-0.5}>+8801641443111</Spaced></CardText>
        </Card>
      </Cards>

      <MapPanel />

      <CartButton aria-label="Cart">
        <ShoppingCart size={28} strokeWidth={1.8} />
        <CartBadge>2</CartBadge>
      </CartButton>

      <Footer>
        <FooterGrid>
          <div>
            <Logo width={100} height={26} />
            <Address>
              <Spaced $ls={0.18}>236/5/A, South Prierbag, Amtola</Spaced>
              <br />
              <Spaced $ls={-0.2}>Bazar, Mirpur, Dhaka-1216</Spaced>
            </Address>
            <Socials>
              <FaSquareFacebook size={24} />
              <FaSquareInstagram size={24} />
              <FaSquareXTwitter size={24} />
            </Socials>
          </div>
          {COLUMNS.map((c) => (
            <div key={c.title}>
              <FooterTitle>{c.title}</FooterTitle>
              <FooterList>
                {c.items.map((t) => (
                  <FooterItem key={t}>{t}</FooterItem>
                ))}
              </FooterList>
            </div>
          ))}
          <div>
            <FooterTitle>Support</FooterTitle>
            <FooterList>
              <FooterItem $ls={-0.5}><Phone size={24} strokeWidth={1.5} />+8801641443111</FooterItem>
              <FooterItem><Mail size={24} strokeWidth={1.5} />info@bunch.com</FooterItem>
              <FooterItem><Mail size={24} strokeWidth={1.5} />support@bunch.com</FooterItem>
            </FooterList>
          </div>
        </FooterGrid>
        <Copyright>{"© 2025 - Designed By  Vida Technology"}</Copyright>
      </Footer>
    </Page>
  );
}
